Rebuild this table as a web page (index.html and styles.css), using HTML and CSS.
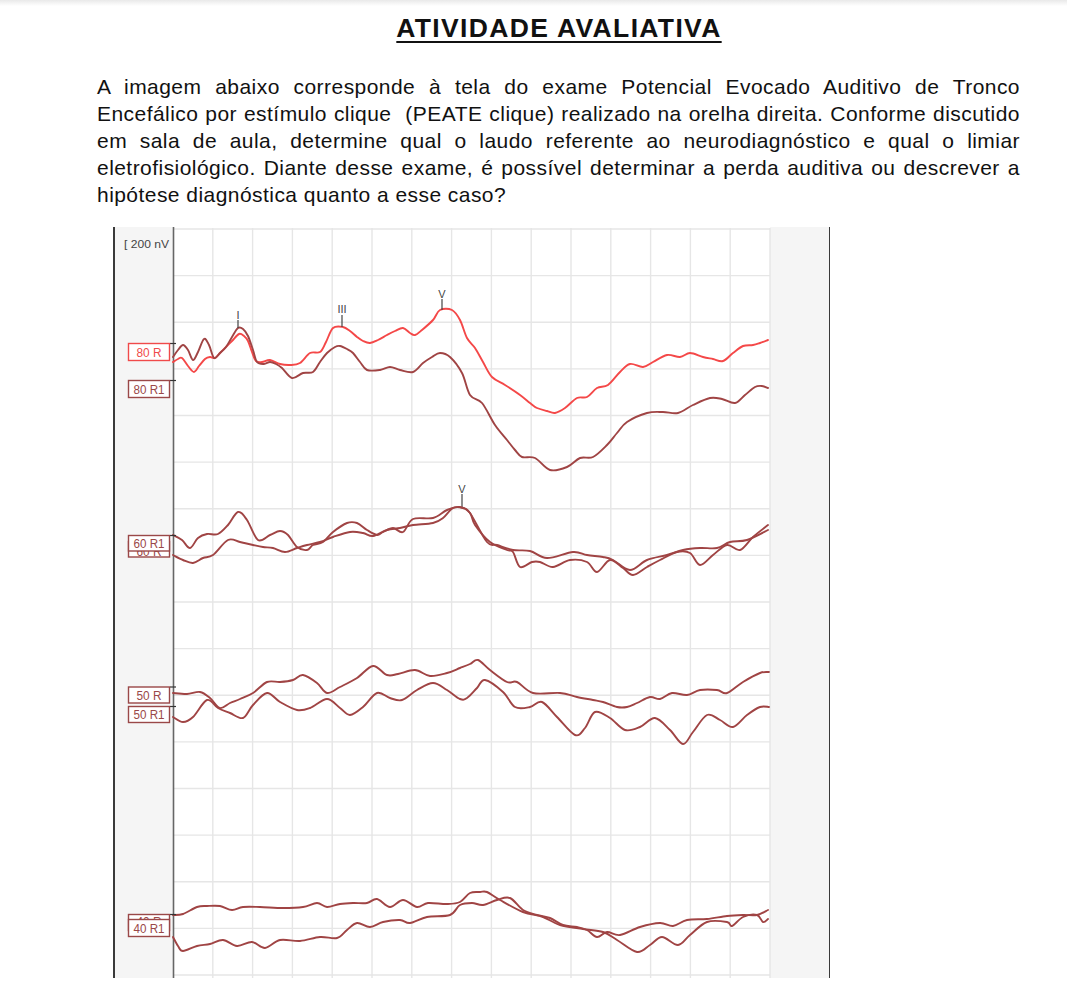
FILE: index.html
```html
<!DOCTYPE html>
<html lang="pt-BR">
<head>
<meta charset="utf-8">
<title>Atividade Avaliativa</title>
<link rel="stylesheet" href="styles.css">
</head>
<body>
<main class="page">
  <h1 class="title">ATIVIDADE AVALIATIVA</h1>
  <p class="question">A imagem abaixo corresponde à tela do exame Potencial Evocado Auditivo de Tronco Encefálico por estímulo clique&nbsp; (PEATE clique) realizado na orelha direita. Conforme discutido em sala de aula, determine qual o laudo referente ao neurodiagnóstico e qual o limiar eletrofisiológico. Diante desse exame, é possível determinar a perda auditiva ou descrever a hipótese diagnóstica quanto a esse caso?</p>
  <figure class="exam">
    <svg class="exam-chart" width="717" height="751" viewBox="113 227 717 751" xmlns="http://www.w3.org/2000/svg">
      <rect class="panel" x="113" y="227" width="60" height="751"/>
      <rect class="plot" x="173" y="227" width="597" height="751"/>
      <rect class="panel" x="770" y="227" width="60" height="751"/>
      <path class="grid" d="M212.8 228V978M252.6 228V978M292.4 228V978M332.2 228V978M372 228V978M411.8 228V978M451.6 228V978M491.4 228V978M531.2 228V978M571 228V978M610.8 228V978M650.6 228V978M690.4 228V978M730.2 228V978M770 228V978
      M173 229H770M173 275.6H770M173 322.3H770M173 368.9H770M173 415.5H770M173 462.1H770M173 508.8H770M173 555.4H770M173 602H770M173 648.6H770M173 695.3H770M173 741.9H770M173 788.5H770M173 835.1H770M173 881.8H770M173 928.4H770M173 975H770"/>
      <line class="frame" x1="114" y1="227" x2="114" y2="978"/>
      <line class="axis" x1="173.5" y1="227" x2="173.5" y2="978"/>
      <line class="frame" x1="830" y1="227" x2="830" y2="978"/>

      <text class="scale" x="124" y="248" textLength="45" lengthAdjust="spacingAndGlyphs">[ 200 nV</text>

      <!-- 80 dB -->
      <polyline class="trace red" points="173,362 178,359 182,358 188,366 194,372 199,366 205,359 210,357 215,358 220,353 225,348 232,341 239,334 244,336 248,341 252,352 256,361 262,362 270,360 280,364 290,365 300,363 310,353 320,352 326,342 333,328 343,327 350,331 357,337 363,341 370,343 378,340 387,335 395,331 403,328 410,333 415,335 422,330 433,320 440,310 452,310 460,320 467,338 475,348 483,362 492,377 505,385 520,395 530,403 537,408 547,411 555,413 565,408 577,398 587,397 597,388 608,385 620,372 630,364 643,367 653,362 667,355 680,357 690,353 703,357 713,359 723,361 733,353 743,346 753,345 760,343 768,340"/>
      <polyline class="trace dark" points="173,357 178,350 183,345 188,350 193,360 198,352 204,339 209,345 214,358 220,353 226,347 232,337 238,328 243,329 248,336 253,350 257,362 264,364 270,362 276,364 282,368 292,378 303,373 313,372 320,362 327,353 335,347 340,346 347,349 353,353 360,362 367,370 380,370 390,367 400,370 413,372 423,363 432,357 440,353 450,357 462,373 470,395 482,403 495,425 507,440 515,450 522,457 535,458 550,470 567,467 580,458 593,457 607,445 617,433 627,422 647,413 663,412 678,413 693,405 710,398 722,399 735,403 745,395 755,387 762,386 768,388"/>

      <g class="peak">
        <text x="238" y="319">I</text><line x1="238" y1="320" x2="238" y2="328"/>
        <text x="342" y="313">III</text><line x1="342" y1="315" x2="342" y2="327"/>
        <text x="442" y="298">V</text><line x1="442" y1="299" x2="442" y2="310"/>
        <text x="462" y="493">V</text><line x1="462" y1="494" x2="462" y2="507"/>
      </g>

      <!-- 60 dB -->
      <polyline class="trace dark" points="173,535 182,540 190,548 198,538 207,534 218,534 228,525 238,512 247,520 258,540 270,535 280,531 288,535 297,547 307,550 313,545 323,542 333,532 347,523 357,523 367,530 377,535 383,532 393,528 403,532 413,519 433,518 447,510 460,507 470,513 475,525 490,542 507,550 513,552 520,567 532,562 540,562 553,567 570,560 587,562 597,572 610,560 623,568 633,575 647,567 660,560 677,552 690,553 700,565 713,555 727,545 740,550 753,537 768,525"/>
      <polyline class="trace dark" points="173,555 183,560 193,563 203,558 213,555 228,540 240,542 253,545 263,547 273,548 285,552 297,548 307,545 320,542 333,537 350,532 363,533 373,536 387,530 400,528 413,525 433,523 443,518 453,508 463,508 470,513 487,542 497,545 513,550 530,551 547,558 573,552 587,555 603,557 613,560 630,570 647,560 667,555 683,550 700,548 717,548 730,542 747,540 768,530"/>

      <!-- 50 dB -->
      <polyline class="trace dark" points="173,693 187,694 200,692 210,698 220,708 230,703 240,699 253,693 267,682 280,682 293,680 303,675 317,683 327,693 340,687 357,678 373,666 387,675 398,674 415,670 430,676 447,673 460,668 470,664 478,660 490,670 507,682 517,682 533,693 560,693 577,697 593,700 603,702 617,707 627,707 637,703 650,697 660,699 672,693 687,695 700,690 717,690 727,693 743,682 760,673 769,672"/>
      <polyline class="trace dark" points="173,717 183,722 193,717 207,700 218,708 230,713 243,718 253,705 267,693 280,702 297,710 310,708 327,699 340,708 350,715 363,707 377,693 390,698 402,700 417,690 433,683 447,690 460,699 467,698 477,688 485,680 503,692 515,707 530,707 542,702 557,717 575,735 585,728 595,712 610,718 625,730 640,727 655,718 670,730 683,744 693,732 707,715 720,720 733,727 747,715 760,707 769,707"/>

      <!-- 40 dB -->
      <polyline class="trace dark" points="173,915 183,914 197,907 207,906 220,906 232,910 243,907 260,907 283,908 303,907 317,903 327,907 340,904 353,903 367,903 377,899 390,907 403,900 417,907 428,903 447,904 460,902 470,893 480,892 487,892 500,900 523,912 543,917 560,925 583,929 603,932 617,940 637,952 650,945 662,937 678,945 690,935 707,922 727,922 732,926 743,917 757,915 763,922 768,919"/>
      <polyline class="trace dark" points="173,937 178,946 183,951 197,946 210,944 223,940 237,946 252,942 265,948 280,940 300,941 320,937 337,938 347,930 357,923 370,927 383,922 400,920 410,923 427,917 450,915 460,905 472,903 483,905 497,900 510,898 523,910 537,915 550,918 563,925 577,927 587,930 597,937 607,932 620,935 640,927 660,923 673,926 687,920 707,919 727,916 743,915 757,915 768,910"/>

      <!-- labels -->
      <g class="label label-red">
        <line class="tick" x1="170" y1="343.5" x2="176" y2="343.5"/>
        <rect x="128.5" y="343.5" width="41" height="17"/>
        <text x="149" y="356.5" textLength="25" lengthAdjust="spacingAndGlyphs">80 R</text>
      </g>
      <g class="label label-dark">
        <line class="tick" x1="170" y1="380.5" x2="176" y2="380.5"/>
        <rect x="128.5" y="380.5" width="41" height="17"/>
        <text x="149" y="393.5" textLength="31" lengthAdjust="spacingAndGlyphs">80 R1</text>
      </g>
      <g class="label label-dark">
        <rect x="128.5" y="541.5" width="41" height="15.5"/>
        <text x="149" y="556" textLength="25" lengthAdjust="spacingAndGlyphs">60 R</text>
      </g>
      <g class="label label-dark">
        <line class="tick" x1="170" y1="535.5" x2="176" y2="535.5"/>
        <rect x="128.5" y="535.5" width="41" height="15.5"/>
        <text x="149" y="548" textLength="31" lengthAdjust="spacingAndGlyphs">60 R1</text>
      </g>
      <g class="label label-dark">
        <line class="tick" x1="170" y1="687" x2="176" y2="687"/>
        <rect x="128.5" y="687" width="41" height="16"/>
        <text x="149" y="699.5" textLength="25" lengthAdjust="spacingAndGlyphs">50 R</text>
      </g>
      <g class="label label-dark">
        <line class="tick" x1="170" y1="706.5" x2="176" y2="706.5"/>
        <rect x="128.5" y="706.5" width="41" height="16"/>
        <text x="149" y="719" textLength="31" lengthAdjust="spacingAndGlyphs">50 R1</text>
      </g>
      <g class="label label-dark">
        <line class="tick" x1="170" y1="914.5" x2="176" y2="914.5"/>
        <rect x="128.5" y="914.5" width="41" height="16"/>
        <text x="149" y="926" textLength="25" lengthAdjust="spacingAndGlyphs">40 R</text>
      </g>
      <g class="label label-dark">
        <rect x="128.5" y="919.5" width="41" height="17"/>
        <text x="149" y="932.5" textLength="31" lengthAdjust="spacingAndGlyphs">40 R1</text>
      </g>
    </svg>
  </figure>
</main>
<script src="script.js"></script>
</body>
</html>
```
FILE: styles.css
```css
html, body {
  margin: 0;
  padding: 0;
}

body {
  background: #ffffff linear-gradient(#e9e9e9, #ffffff 6px) no-repeat;
  font-family: "Liberation Sans", Arial, sans-serif;
  color: #111111;
  min-height: 1006px;
}

.page {
  width: 923px;
  padding-left: 97px;
  box-sizing: content-box;
}

.title {
  margin: 13px 0 0;
  padding-left: 1px;
  font-size: 26.5px;
  line-height: 30px;
  font-weight: 700;
  letter-spacing: 1.35px;
  text-align: center;
  text-decoration: underline;
  text-decoration-thickness: 2px;
  text-underline-offset: 4px;
}

.question {
  margin: 30px 0 0;
  font-size: 21px;
  line-height: 27.1px;
  letter-spacing: 0.45px;
  text-align: justify;
}

.exam {
  margin: 19px 0 0 16px;
  width: 717px;
  height: 751px;
}

.exam-chart {
  display: block;
  font-family: "Liberation Sans", Arial, sans-serif;
}

.panel {
  fill: #f5f5f5;
}

.plot {
  fill: #ffffff;
}

.grid {
  fill: none;
  stroke: #e6e6e6;
  stroke-width: 1.4;
}

.frame {
  stroke: #3a3a3a;
  stroke-width: 2;
}

.axis {
  stroke: #666666;
  stroke-width: 1.6;
}

.scale {
  font-size: 11px;
  fill: #444444;
}

.trace {
  fill: none;
  stroke-width: 1.9;
  stroke-linejoin: round;
  stroke-linecap: round;
}

.trace.red {
  stroke: #f44848;
}

.trace.dark {
  stroke: #a04444;
}

.peak text {
  font-size: 11px;
  fill: #444444;
  text-anchor: middle;
}

.peak line {
  stroke: #444444;
  stroke-width: 1.2;
}

.label rect {
  fill: #ffffff;
  stroke-width: 1.4;
}

.label text {
  font-size: 12px;
  text-anchor: middle;
}

.label .tick {
  stroke: #333333;
  stroke-width: 1.2;
}

.label-red rect {
  stroke: #f04a4a;
}

.label-red text {
  fill: #f04a4a;
}

.label-dark rect {
  stroke: #9a4848;
}

.label-dark text {
  fill: #9a4848;
}
```
FILE: script.js
```js
(function () {
  var NS = "http://www.w3.org/2000/svg";
  var lines = document.querySelectorAll("polyline.trace");
  Array.prototype.forEach.call(lines, function (pl) {
    var pts = pl.getAttribute("points").trim().split(/\s+/).map(function (p) {
      var xy = p.split(",");
      return [parseFloat(xy[0]), parseFloat(xy[1])];
    });
    if (pts.length < 2) return;
    var d = "M" + pts[0][0] + " " + pts[0][1];
    for (var i = 0; i < pts.length - 1; i++) {
      var p0 = pts[i - 1] || pts[i];
      var p1 = pts[i];
      var p2 = pts[i + 1];
      var p3 = pts[i + 2] || p2;
      var c1x = p1[0] + (p2[0] - p0[0]) / 6;
      var c1y = p1[1] + (p2[1] - p0[1]) / 6;
      var c2x = p2[0] - (p3[0] - p1[0]) / 6;
      var c2y = p2[1] - (p3[1] - p1[1]) / 6;
      d += "C" + c1x.toFixed(2) + " " + c1y.toFixed(2) + " " +
        c2x.toFixed(2) + " " + c2y.toFixed(2) + " " + p2[0] + " " + p2[1];
    }
    var path = document.createElementNS(NS, "path");
    path.setAttribute("class", pl.getAttribute("class"));
    path.setAttribute("d", d);
    pl.parentNode.replaceChild(path, pl);
  });
})();
```
